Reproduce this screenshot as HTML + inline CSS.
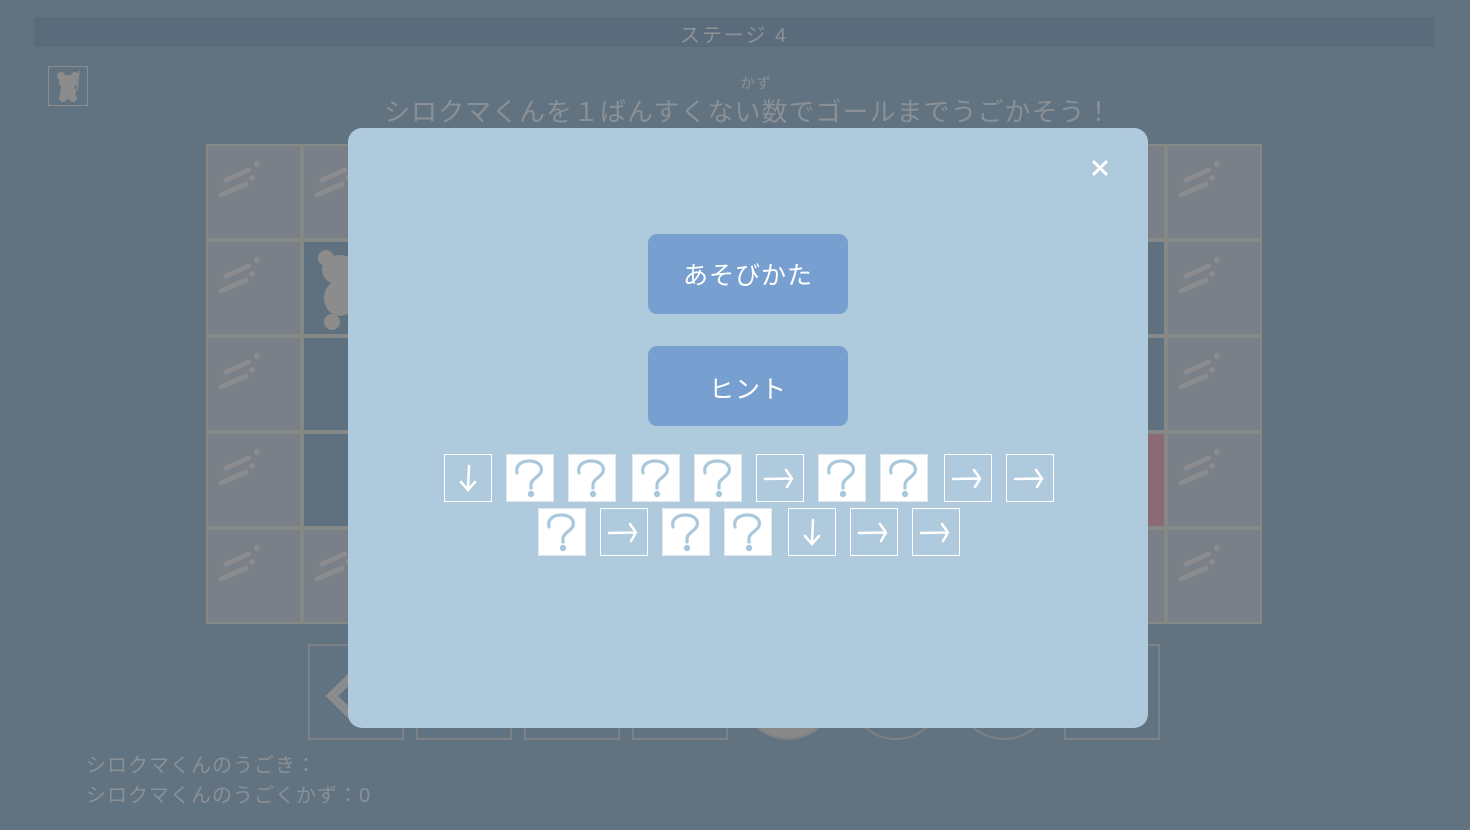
<!DOCTYPE html>
<html><head><meta charset="utf-8"><style>
*{margin:0;padding:0;box-sizing:border-box}
body{width:1470px;height:830px;background:#617380;position:relative;overflow:hidden;font-family:"Liberation Sans","Noto Sans CJK JP",sans-serif}
.a{position:absolute}
.hdr{left:34px;top:17px;width:1400px;height:30px;background:#5a6c7b;color:#8d9297;font-size:20px;text-align:center;line-height:38px;letter-spacing:2px}
.cell{position:absolute;width:96px;height:96px;border:2px solid #868888;background:#7a8087}
.dark{background:#5f717e}
.pink{background:#8a6a77}
.cell svg{position:absolute;left:6px;top:6px}
.bb{position:absolute;width:96px;height:96px;border:2px solid #7d8185;top:644px}
.modal{left:348px;top:128px;width:800px;height:600px;background:#afcadc;border-radius:14px}
.btn{position:absolute;left:300px;width:200px;height:80px;background:#779fd0;border-radius:9px;color:#fff;font-size:25px;text-align:center;letter-spacing:1px}
.t{position:absolute;width:48px;height:48px;border:1.5px solid #fff}
.q{background:#fff;border-color:#dfe8ef}
.t svg{position:absolute;left:0;top:0}
.txt{color:#8a9095;font-size:20px;letter-spacing:1px}
</style></head><body>
<div class="a hdr">ステージ 4</div>
<div class="a" style="left:48px;top:66px;width:40px;height:40px;border:1.5px solid #8a8d90">
<svg width="38" height="38"><g fill="#8c8c8c"><circle cx="12" cy="9" r="4"/><circle cx="26" cy="9" r="4"/><ellipse cx="19" cy="15" rx="9" ry="7"/><ellipse cx="19" cy="25" rx="8" ry="7"/><circle cx="14" cy="31" r="4"/><circle cx="24" cy="31" r="4"/></g><line x1="30" y1="4" x2="28" y2="24" stroke="#8c8c8c" stroke-width="1.5"/></svg></div>
<div class="a txt" style="left:740px;top:72px;font-size:15px">かず</div>
<div class="a txt" style="left:384px;top:92px;font-size:26px;letter-spacing:1px">シロクマくんを１ばんすくない数でゴールまでうごかそう！</div>
<div id="grid"></div>
<div class="bb" style="left:308px"><svg width="92" height="92"><path d="M42 30 L22 50 L42 70" stroke="#8a8c8e" stroke-width="9" fill="none"/></svg></div>
<div class="bb" style="left:416px"></div><div class="bb" style="left:524px"></div><div class="bb" style="left:632px"></div>
<div class="bb" style="left:740px;border-radius:50%;background:#888"></div>
<div class="bb" style="left:848px;border-radius:50%"></div>
<div class="bb" style="left:956px;border-radius:50%"></div>
<div class="bb" style="left:1064px"></div>
<div class="a txt" style="left:86px;top:749px">シロクマくんのうごき：</div>
<div class="a txt" style="left:86px;top:779px">シロクマくんのうごくかず：0</div>
<div class="a modal">
<svg class="a" style="left:743px;top:31px" width="18" height="18"><path d="M2 2L16 16M16 2L2 16" stroke="#fff" stroke-width="3"/></svg>
<div class="btn" style="top:106px;line-height:84px">あそびかた</div>
<div class="btn" style="top:218px;line-height:88px">ヒント</div>
<div id="tiles"></div>
</div>
<script>
var g=document.getElementById('grid'),h='';
var wall='<svg width="84" height="84"><g stroke="#8c8c8e" stroke-width="5" stroke-linecap="round"><line x1="12" y1="28" x2="35" y2="18"/><line x1="7" y1="43" x2="32" y2="32"/></g><circle cx="43" cy="12" r="3" fill="#8c8c8e"/><circle cx="38" cy="26" r="3" fill="#8c8c8e"/></svg>';
for(var r=0;r<5;r++)for(var c=0;c<11;c++){var cls='cell',x=206+c*96,y=144+r*96,inner=wall;
if(c==1&&r>=1&&r<=3){cls+=' dark';inner='';}
if(c==1&&r==1)inner='<svg width="84" height="84"><g fill="#8c8c8c"><circle cx="16" cy="10" r="8"/><ellipse cx="30" cy="22" rx="18" ry="15"/><ellipse cx="30" cy="50" rx="16" ry="18"/><circle cx="22" cy="74" r="8"/></g></svg>';
if(c==9&&(r==1||r==2)){cls+=' dark';inner='';}
if(c==9&&r==3){cls+=' pink';inner='';}
h+='<div class="'+cls+'" style="left:'+x+'px;top:'+y+'px">'+inner+'</div>';}
g.innerHTML=h;
var down='<svg width="46" height="46"><path d="M24 11L23 34M16 27L23 35L30 27" stroke="#fff" stroke-width="2.5" fill="none" stroke-linecap="round"/></svg>';
var right='<svg width="46" height="46"><path d="M8 24L34 23.5M29 15L35 23.5L30 32" stroke="#fff" stroke-width="2.5" fill="none" stroke-linecap="round"/></svg>';
var q='<svg width="46" height="46"><path d="M10 18C8 10 15 6 22 6C30 6 36 10 34 17C32 22 24 24 24 30L24 33" stroke="#a9c8dc" stroke-width="3.2" fill="none" stroke-linecap="round"/><circle cx="24" cy="39" r="3.2" fill="#a9c8dc"/></svg>';
var r1=[[444,'d'],[506,'q'],[568,'q'],[632,'q'],[694,'q'],[756,'r'],[818,'q'],[880,'q'],[944,'r'],[1006,'r']];
var r2=[[538,'q'],[600,'r'],[662,'q'],[724,'q'],[788,'d'],[850,'r'],[912,'r']];
var t='';function add(a,y){a.forEach(function(e){var s=e[1]=='q'?q:e[1]=='d'?down:right;t+='<div class="t'+(e[1]=='q'?' q':'')+'" style="left:'+(e[0]-348)+'px;top:'+(y-128)+'px">'+s+'</div>';});}
add(r1,454);add(r2,508);document.getElementById('tiles').innerHTML=t;
</script>
</body></html>
